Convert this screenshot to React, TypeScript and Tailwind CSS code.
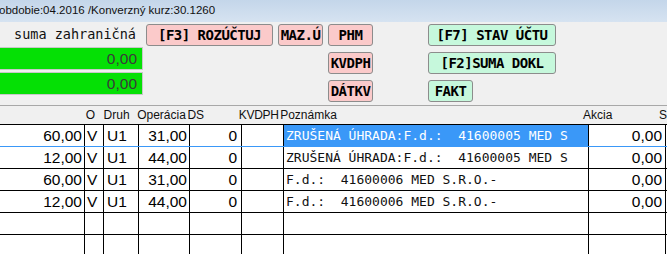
import React from "react";

type Row = { a: string; o: string; d: string; op: string; ds: string; p: string; ak: string; sel?: boolean };

const rows: Row[] = [
  { a: "60,00", o: "V", d: "U1", op: "31,00", ds: "0", p: "ZRUŠENÁ ÚHRADA:F.d.:  41600005 MED S", ak: "0,00", sel: true },
  { a: "12,00", o: "V", d: "U1", op: "44,00", ds: "0", p: "ZRUŠENÁ ÚHRADA:F.d.:  41600005 MED S", ak: "0,00" },
  { a: "60,00", o: "V", d: "U1", op: "31,00", ds: "0", p: "F.d.:  41600006 MED S.R.O.-", ak: "0,00" },
  { a: "12,00", o: "V", d: "U1", op: "44,00", ds: "0", p: "F.d.:  41600006 MED S.R.O.-", ak: "0,00" },
  { a: "", o: "", d: "", op: "", ds: "", p: "", ak: "" },
  { a: "", o: "", d: "", op: "", ds: "", p: "", ak: "" },
];

function Btn({ children, w, green }: { children: React.ReactNode; w: string; green?: boolean }) {
  return (
    <div
      className={`${w} h-[22px] flex items-center justify-center rounded-[3px] border border-[#8c8c8c] ${
        green ? "bg-[#c6f8dc]" : "bg-[#fbcaca]"
      } font-['DejaVu_Sans_Mono',monospace] font-bold text-[14px] tracking-[-0.5px] text-black whitespace-pre leading-none`}
    >
      {children}
    </div>
  );
}

export default function App() {
  return (
    <div className="w-[667px] h-[254px] overflow-hidden bg-[#f0f0f0] flex flex-col font-['Liberation_Sans',Arial,sans-serif]">
      {/* title bar */}
      <div className="h-[22px] shrink-0 bg-gradient-to-b from-[#c4d6ea] to-[#d6e3f1] flex items-center">
        <span className="-ml-[1px] text-[11.5px] text-[#111]">obdobie:04.2016 /Konverzný kurz:30.1260</span>
      </div>

      {/* top controls */}
      <div className="h-[83px] shrink-0 flex items-start">
        <div className="w-[143px] flex flex-col">
          <div className="h-[24px] flex items-center justify-end pr-[7px] font-['DejaVu_Sans_Mono',monospace] text-[13.5px] text-[#111] whitespace-pre">
            suma zahraničná
          </div>
          <div className="mt-[1px] h-[23px] bg-[#05e005] border border-[#c8c8c8] border-l-0 flex items-center justify-end pr-[5px] text-[15.5px] text-[#3a3a3a]">
            0,00
          </div>
          <div className="mt-[2px] h-[23px] bg-[#05e005] border border-[#c8c8c8] border-l-0 flex items-center justify-end pr-[5px] text-[15.5px] text-[#3a3a3a]">
            0,00
          </div>
        </div>
        <div className="ml-[3px] mt-[2px]">
          <Btn w="w-[127px]">[F3] ROZÚČTUJ</Btn>
        </div>
        <div className="ml-[5px] mt-[2px]">
          <Btn w="w-[45px]">MAZ.Ú</Btn>
        </div>
        <div className="ml-[5px] mt-[2px] flex flex-col gap-[6px]">
          <Btn w="w-[45px]">PHM</Btn>
          <Btn w="w-[45px]">KVDPH</Btn>
          <Btn w="w-[45px]">DÁTKV</Btn>
        </div>
        <div className="ml-[55px] mt-[2px] flex flex-col gap-[6px]">
          <Btn w="w-[128px]" green>[F7] STAV ÚČTU</Btn>
          <Btn w="w-[128px]" green>[F2]SUMA DOKL</Btn>
          <Btn w="w-[45px]" green>FAKT</Btn>
        </div>
      </div>

      {/* grid */}
      <div className="flex-1 flex flex-col border-t border-[#a8a8a8] min-h-0">
        <div className="h-[18px] shrink-0 flex items-center text-[12px] text-[#111] whitespace-nowrap">
          <div className="w-[85px]" />
          <div className="w-[19px] pl-[2px]">O</div>
          <div className="w-[35px] pl-[1px]">Druh</div>
          <div className="w-[51px]">Operácia</div>
          <div className="w-[52px]">DS</div>
          <div className="w-[42px] tracking-[-0.3px]">KVDPH</div>
          <div className="w-[305px]">Poznámka</div>
          <div className="w-[77px] pl-[2px]">Akcia</div>
          <div className="pl-[2px]">S</div>
        </div>
        <div className="flex-1 bg-white border-t border-black">
          {rows.map((r, i) => (
            <div
              key={i}
              className={`h-[22px] box-border flex border-b ${r.sel ? "border-[#3a98f8]" : "border-black"} text-[15.5px] text-black whitespace-nowrap`}
            >
              <div className="w-[85px] border-r border-black flex items-center justify-end pr-[2px]">{r.a}</div>
              <div className="w-[19px] border-r border-black flex items-center pl-[2px]">{r.o}</div>
              <div className="w-[35px] border-r border-black flex items-center pl-[3px]">{r.d}</div>
              <div className="w-[51px] border-r border-black flex items-center justify-end pr-[2px]">{r.op}</div>
              <div className="w-[52px] border-r border-black flex items-center justify-end pr-[4px]">{r.ds}</div>
              <div className="w-[42px] border-r border-black" />
              <div className="w-[305px] border-r border-black flex">
                <div
                  className={`flex-1 flex items-center pl-[2px] font-['DejaVu_Sans_Mono',monospace] text-[13px] whitespace-pre ${
                    r.sel ? "bg-[#3a98f8] text-white" : "text-[#111]"
                  }`}
                >
                  {r.p}
                </div>
              </div>
              <div className="w-[77px] border-r border-black flex items-center justify-end pr-[3px]">{r.ak}</div>
              <div className="flex-1" />
            </div>
          ))}
        </div>
      </div>
    </div>
  );
}
